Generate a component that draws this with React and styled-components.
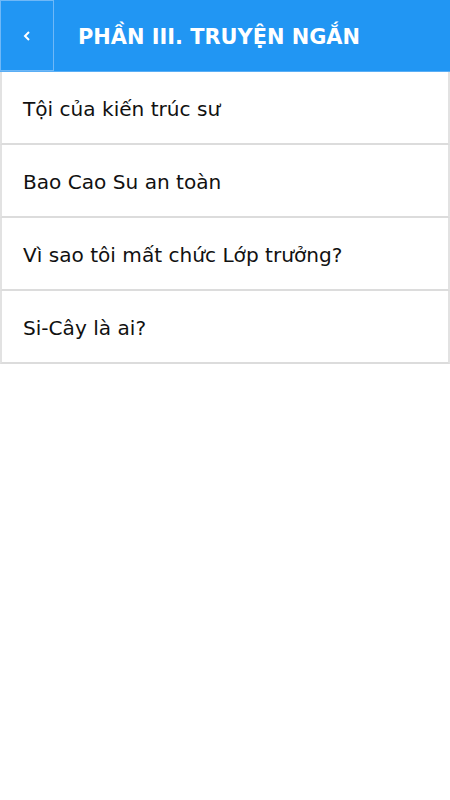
import React from 'react';
import styled, { createGlobalStyle } from 'styled-components';

const GlobalStyle = createGlobalStyle`
  html, body {
    margin     : 0;
    padding    : 0;
    background : #ffffff;
    font-family: 'DejaVu Sans', Verdana, sans-serif;
  }
`;

const Header = styled.header`
  display          : flex;
  align-items      : stretch;
  height           : 72px;
  background-color : #2196f3;
  border-bottom    : 1px solid #5aaef5;
  box-sizing       : border-box;
`;

const BackButton = styled.button`
  width            : 54px;
  flex             : 0 0 54px;
  border           : 1px solid #6fb8f7;
  background-color : #2196f3;
  color            : #ffffff;
  display          : flex;
  align-items      : center;
  justify-content  : center;
  padding          : 0;
  cursor           : pointer;
`;

const Title = styled.h1`
  margin      : 0;
  padding     : 2px 0 0 24px;
  display     : flex;
  align-items : center;
  color       : #ffffff;
  font-size   : 20.9px;
  font-weight : 700;
`;

const List = styled.ul`
  list-style : none;
  margin     : 0;
  padding    : 0;
  width      : 450px;
  box-sizing : border-box;
`;

const Row = styled.li`
  height        : 73px;
  display       : flex;
  align-items   : center;
  padding       : 3px 0 0 21px;
  box-sizing    : border-box;
  border-left   : 2px solid #e2e2e2;
  border-right  : 2px solid #e2e2e2;
  border-bottom : 2px solid #dcdcdc;
  font-size     : 20.1px;
  color         : #111111;
`;

const items = [
  'Tội của kiến trúc sư',
  'Bao Cao Su an toàn',
  'Vì sao tôi mất chức Lớp trưởng?',
  'Si-Cây là ai?',
];

const App = () => (
  <>
    <GlobalStyle />
    <Header>
      <BackButton aria-label="back">
        <svg width="10" height="12" viewBox="0 0 10 12">
          <path d="M7 2 L3 6 L7 10" fill="none" stroke="#fff" strokeWidth="2" />
        </svg>
      </BackButton>
      <Title>PHẦN III. TRUYỆN NGẮN</Title>
    </Header>
    <List>
      { items.map((t) => <Row key={ t }>{ t }</Row>) }
    </List>
  </>
);

export default App;
